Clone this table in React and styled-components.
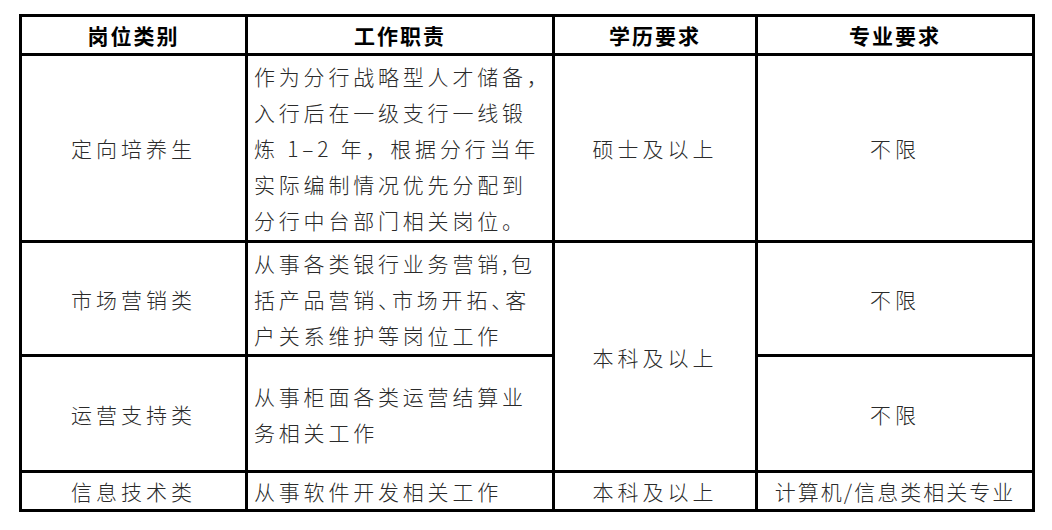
import React from 'react';
import styled, { createGlobalStyle } from 'styled-components';

const GlobalStyle = createGlobalStyle`
  html, body {
    margin: 0;
    padding: 0;
    background: #fff;
  }
  body {
    font-family: "Noto Sans CJK SC", "Noto Sans", sans-serif;
  }
`;

const Page = styled.div`
  padding: 14px 0 0 19px;
`;

// black background + gaps act as the table rules
const Table = styled.div`
  display: grid;
  grid-template-columns: 223px 304px 200px 274px;
  grid-template-rows: 36px 184px 111px 113px 36px;
  gap: 3px;
  padding: 3px;
  background: #000;
  width: max-content;
`;

const Cell = styled.div`
  background: #fff;
  display: flex;
  align-items: center;
  justify-content: ${(p) => (p.$left ? 'flex-start' : 'center')};
  padding: 0 0 0 ${(p) => (p.$left ? '6px' : '0')};
  grid-row: ${(p) => (p.$span ? `span ${p.$span}` : 'auto')};
  font-size: 21px;
  font-weight: 300;
  line-height: 36px;
  letter-spacing: ${(p) => (p.$tight ? '2px' : p.$left ? '3.8px' : '4px')};
  color: #2a2a2a;
  white-space: nowrap;
  overflow: hidden;
`;

const Head = styled(Cell)`
  font-weight: 700;
  color: #000;
  letter-spacing: 2px;
`;

const Lines = styled.div`
  text-align: left;
`;

// the enumeration comma sits half-width in the source document
const Pause = styled.span`
  letter-spacing: -7px;
`;

const rows = [
  {
    type: '定向培养生',
    duty: ['作为分行战略型人才储备，', '入行后在一级支行一线锻', '炼 1–2 年，根据分行当年', '实际编制情况优先分配到', '分行中台部门相关岗位。'],
    edu: '硕士及以上',
    major: '不限',
  },
  {
    type: '市场营销类',
    duty: ['从事各类银行业务营销,包', '括产品营销、市场开拓、客', '户关系维护等岗位工作'],
    edu: '本科及以上',
    eduSpan: 2,
    major: '不限',
  },
  {
    type: '运营支持类',
    duty: ['从事柜面各类运营结算业', '务相关工作'],
    major: '不限',
  },
  {
    type: '信息技术类',
    duty: ['从事软件开发相关工作'],
    edu: '本科及以上',
    major: '计算机/信息类相关专业',
    tight: true,
  },
];

const renderLine = (line) =>
  line.split('、').map((part, i, arr) => (
    <React.Fragment key={i}>
      {part}
      {i < arr.length - 1 && <Pause>、</Pause>}
    </React.Fragment>
  ));

export default function App() {
  return (
    <Page>
      <GlobalStyle />
      <Table>
        <Head>岗位类别</Head>
        <Head>工作职责</Head>
        <Head>学历要求</Head>
        <Head>专业要求</Head>
        {rows.map((r) => (
          <React.Fragment key={r.type}>
            <Cell>{r.type}</Cell>
            <Cell $left>
              <Lines>
                {r.duty.map((l, i) => (
                  <div key={i}>{renderLine(l)}</div>
                ))}
              </Lines>
            </Cell>
            {r.edu && <Cell $span={r.eduSpan}>{r.edu}</Cell>}
            <Cell $tight={r.tight}>{r.major}</Cell>
          </React.Fragment>
        ))}
      </Table>
    </Page>
  );
}
